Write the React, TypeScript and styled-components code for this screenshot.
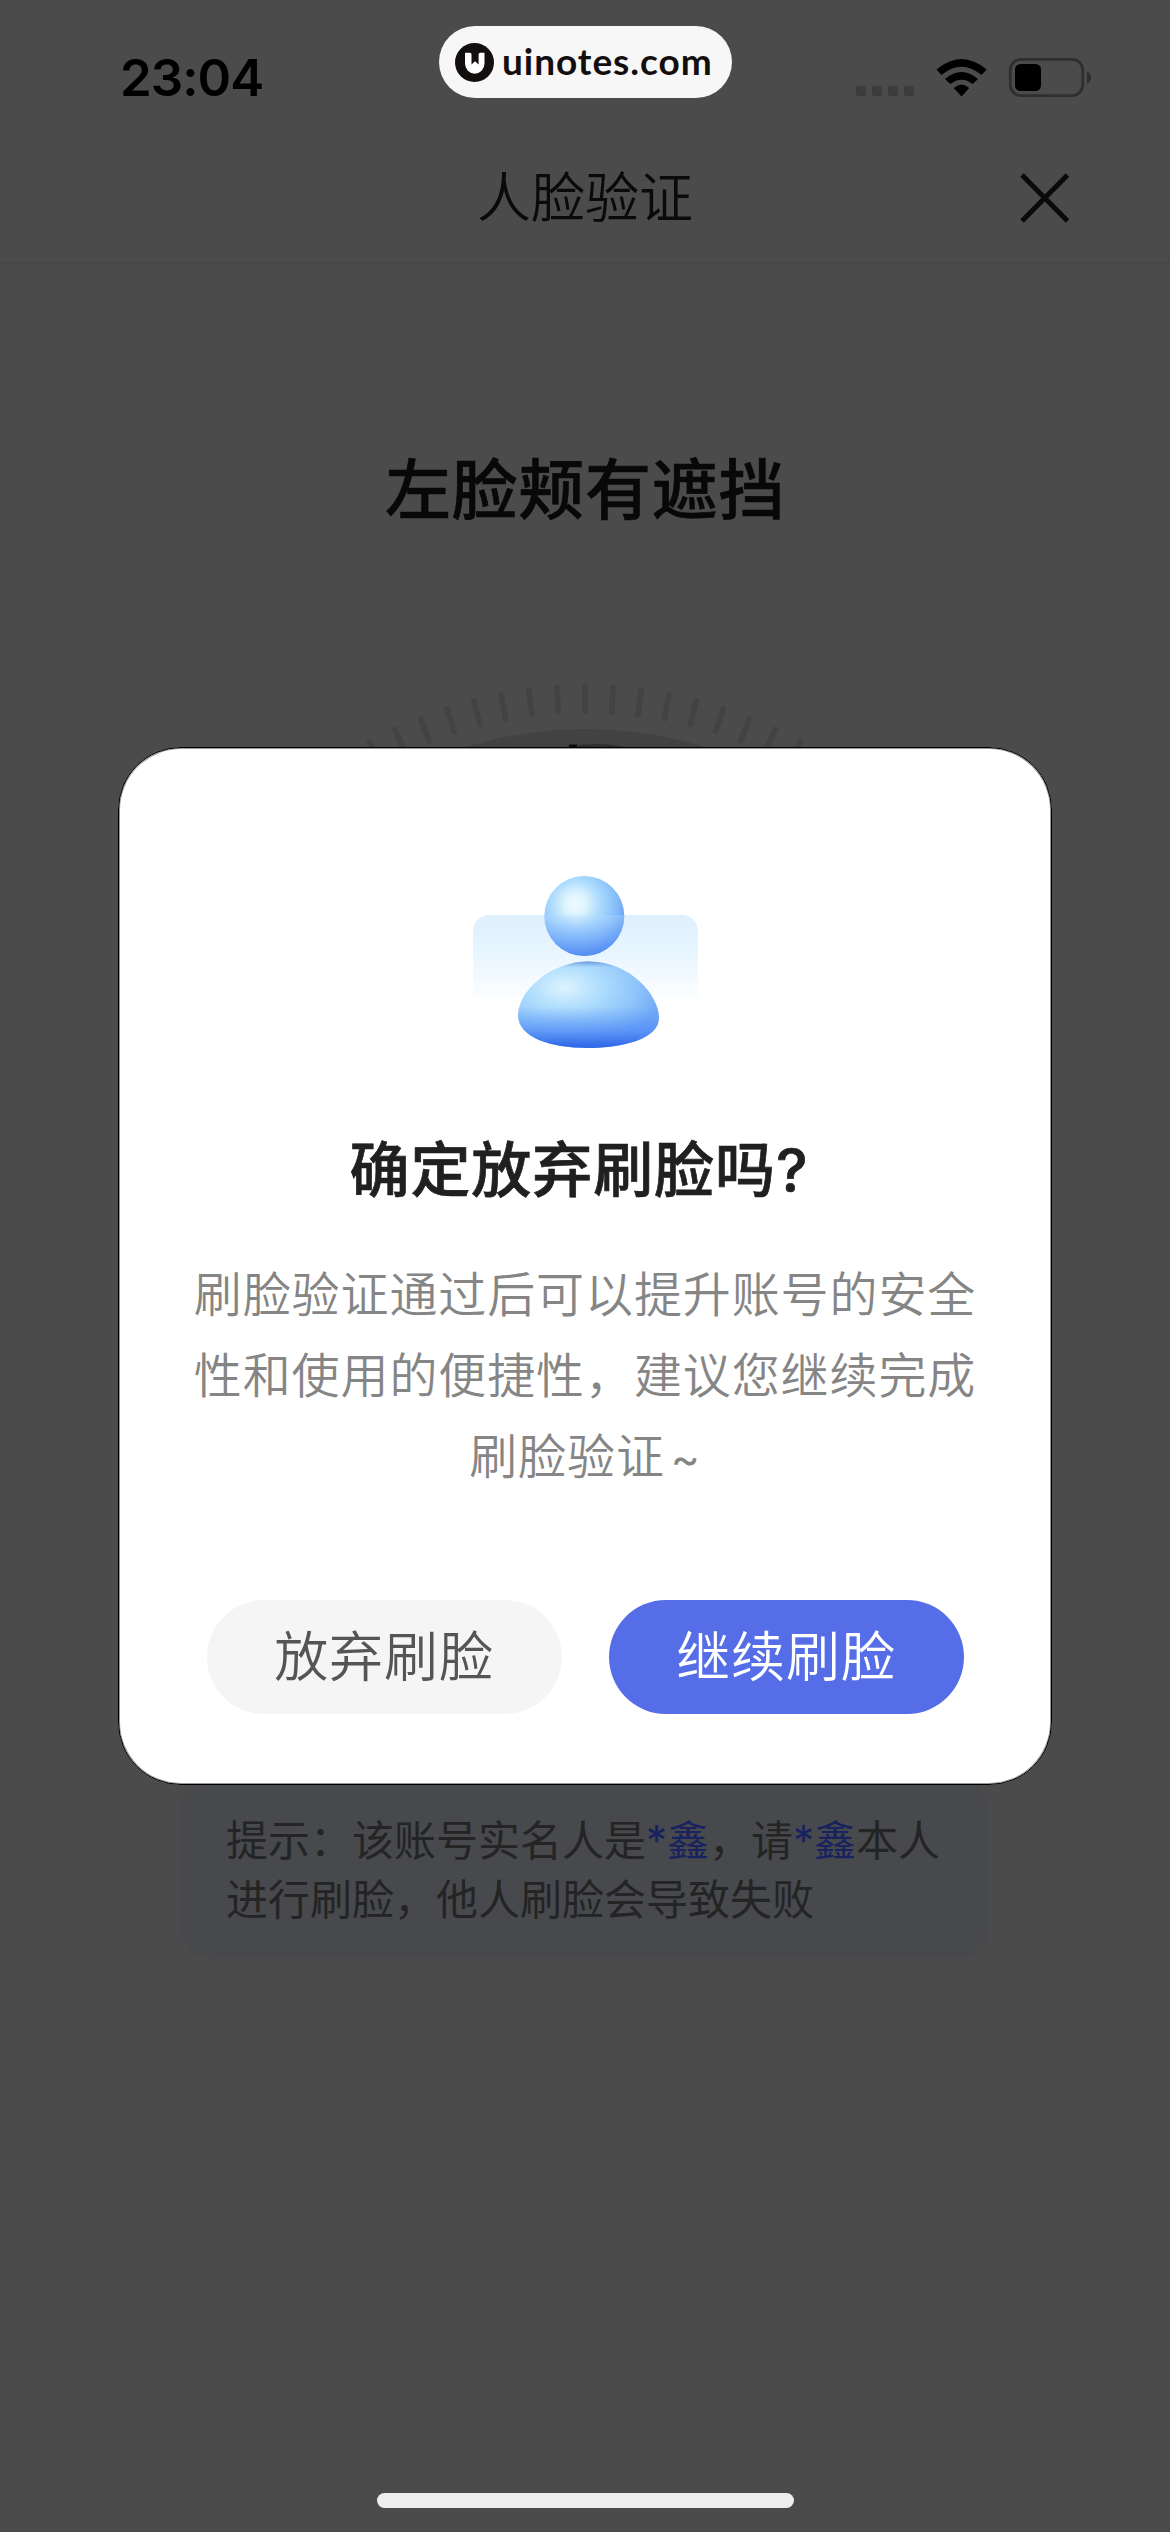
import React from "react";
import styled, { createGlobalStyle } from "styled-components";

const CJK = `"Noto Sans CJK SC", sans-serif`;

const Global = createGlobalStyle`
  * { box-sizing: border-box; }
  html, body { margin: 0; padding: 0; background: #4b4b4b; }
  button { border: 0; padding: 0; background: none; font: inherit; }
`;

const Screen = styled.div`
  position: relative;
  width: 1170px;
  height: 2532px;
  display: flex;
  flex-direction: column;
  align-items: center;
  overflow: hidden;
  background: #4b4b4b;
  font-family: ${CJK};
`;

const StatusBar = styled.header`
  width: 100%;
  height: 132px;
  flex: none;
  display: flex;
  justify-content: space-between;
  padding: 26px 79px 0 120px;
`;

const Clock = styled.time`
  width: 319px;
  padding-top: 20px;
  font: 600 51px/64px Inter, sans-serif;
  letter-spacing: -1px;
  color: #000;
`;

const SitePill = styled.div`
  width: 293px;
  height: 72px;
  flex: none;
  border-radius: 36px;
  background: #f7f7f7;
  display: flex;
  align-items: center;
  padding-left: 16px;
  gap: 8px;
  color: #140f0f;
  white-space: nowrap;
`;

const SiteName = styled.span`
  font: 700 37px/70px Lato, sans-serif;
  letter-spacing: 0.95px;
  height: 72px;
`;

const StatusIcons = styled.div`
  width: 359px;
  display: flex;
  justify-content: flex-end;
  padding-top: 32px;
`;

const NavBar = styled.nav`
  width: 100%;
  height: 132px;
  flex: none;
  display: grid;
  grid-template-columns: 150px 1fr 150px;
  align-items: center;
  border-bottom: 2px solid #474747;
`;

const NavTitle = styled.h1`
  grid-column: 2;
  margin: 0;
  padding-bottom: 5px;
  text-align: center;
  font-size: 54px;
  line-height: 80px;
  font-weight: 350;
  color: #0a0a0a;
`;

const CloseButton = styled.button`
  display: flex;
  padding-top: 1px;
`;

const Instruction = styled.h2`
  margin: 172px 0 0;
  font-size: 66px;
  line-height: 98px;
  letter-spacing: 0.7px;
  font-weight: 500;
  -webkit-text-stroke: 0.6px #080808;
  color: #080808;
`;

const Scanner = styled.div`
  height: 1101px;
  margin-top: 145px;
  flex: none;
  display: flex;
`;

const Tip = styled.section`
  width: 808px;
  height: 178px;
  flex: none;
  border-radius: 30px;
  background: #47494d;
  padding: 28px 40px 0 45px;
  font-size: 42px;
  line-height: 59px;
  color: #242424;
  white-space: nowrap;
`;

const TipLine = styled.p`
  margin: 0;
`;

const Name = styled.b`
  font-weight: 400;
  color: #18225f;
`;

const Star = styled.span`
  display: inline-block;
  width: 21px;
  text-align: center;
  font-family: Inter, sans-serif;
  line-height: 0;
`;

const Latin = styled.span`
  font-family: Inter, sans-serif;
  line-height: 0;
`;

const Overlay = styled.div`
  position: absolute;
  inset: 0;
  display: flex;
  flex-direction: column;
  align-items: center;
  padding-top: 747px;
`;

const Dialog = styled.div`
  width: 934px;
  height: 1038px;
  flex: none;
  border: 1px solid #000;
  border-radius: 63px;
  background: #fff;
  box-shadow: inset 0 0 0 1px rgba(0, 0, 0, 0.4);
  display: flex;
  flex-direction: column;
  align-items: center;
  padding-top: 118px;
`;

const DialogTitle = styled.h3`
  margin: 72px 0 0;
  padding-right: 12px;
  font-size: 60px;
  line-height: 88px;
  letter-spacing: 0.9px;
  font-weight: 500;
  -webkit-text-stroke: 0.7px #202020;
  color: #202020;
  white-space: nowrap;
`;

const DialogText = styled.p`
  margin: 41px 0 0;
  font-size: 48px;
  line-height: 81px;
  letter-spacing: 0.9px;
  font-weight: 350;
  color: #858585;
  text-align: center;
  white-space: nowrap;
`;

const Tilde = styled(Latin)`
  font-size: 44px;
  font-weight: 400;
  margin-left: 6px;
`;

const Actions = styled.div`
  display: flex;
  gap: 47px;
  margin-top: 106px;
`;

const ActionButton = styled.button<{ $primary?: boolean }>`
  width: 355px;
  height: 114px;
  padding-bottom: 7px;
  border-radius: 57px;
  background: ${(p) => (p.$primary ? "#556ee8" : "#f5f5f5")};
  color: ${(p) => (p.$primary ? "#fff" : "#555")};
  font-family: ${CJK};
  font-size: 54px;
  line-height: 80px;
  letter-spacing: 0.9px;
  font-weight: 350;
`;

const HomeIndicator = styled.div`
  width: 417px;
  height: 15px;
  flex: none;
  margin-top: 708px;
  border-radius: 8px;
  background: #eee;
`;

const SiteLogo = () => (
  <svg width="39" height="39" viewBox="0 0 39 39">
    <circle cx="19.5" cy="19.5" r="19.5" fill="#140f0f" />
    <path
      d="M10.500 9.700H15q1.500 0 1.500 1.500V21.500L20 18.300 23.600 21.500V11.200q0-1.500 1.500-1.500H29.500V20.500a9.750 10.200 0 0 1-19.500 0V10.200q0-.5.5-.5z"
      fill="#fff"
    />
  </svg>
);

const Signals = () => (
  <svg width="235" height="40" viewBox="856 58 235 40">
    {[856, 872, 888, 904].map((x) => (
      <rect key={x} x={x} y="86" width="10" height="10" rx="3" fill="#3b3b3b" />
    ))}
    <g fill="#000">
      <path d="M936.500 69.500 Q961.500 48.500 986.700 69.500 L981.500 75 Q961.500 58.500 941.500 75 Z" />
      <path d="M945 79 Q961.500 65 978 79 L972.800 84 Q961.500 75.500 950.300 84 Z" />
      <path d="M953.800 88 Q961.500 81 969.200 88 L961.500 96.500 Z" />
    </g>
    <rect x="1010.300" y="59.400" width="72.400" height="36.200" rx="10.500" fill="none" stroke="#2f2f2f" strokeWidth="2.800" />
    <rect x="1015" y="64" width="26" height="27" rx="5.500" fill="#000" />
    <path d="M1087 71.500q4.200 1.500 4.200 6t-4.200 6z" fill="#2f2f2f" />
  </svg>
);

const Cross = () => (
  <svg width="50" height="50" viewBox="0 0 50 50">
    <path d="M2 2L47.500 48M47.500 2L2 48" stroke="#0a0a0a" strokeWidth="5" />
  </svg>
);

const FaceRing = () => (
  <svg width="910" height="1101" viewBox="-455 -455 910 1101">
    {Array.from({ length: 100 }, (_, i) => (
      <line
        key={i}
        y1="-447"
        y2="-423"
        stroke="#434343"
        strokeWidth="5.800"
        strokeLinecap="round"
        transform={`rotate(${i * 3.6})`}
      />
    ))}
    <circle r="405" fill="#424242" />
    <circle cx="12" cy="-240" r="150" fill="#2f2f2f" />
    <rect x="-16" y="-389.500" width="8" height="8" fill="#0c0c0c" />
  </svg>
);

const PersonArt = () => (
  <svg width="225" height="184" viewBox="473 866 225 184">
    <defs>
      <radialGradient id="head" cx="0.390" cy="0.350" r="0.680">
        <stop offset="0" stopColor="#f0fbff" />
        <stop offset="0.200" stopColor="#def3ff" />
        <stop offset="0.450" stopColor="#abdbfd" />
        <stop offset="0.750" stopColor="#86befa" />
        <stop offset="1" stopColor="#5f98f0" />
      </radialGradient>
      <linearGradient id="headShade" x1="0" y1="0" x2="0" y2="1">
        <stop offset="0.500" stopColor="#5c96fa" stopOpacity="0" />
        <stop offset="1" stopColor="#4c88f4" stopOpacity="0.700" />
      </linearGradient>
      <radialGradient id="body" cx="0.330" cy="0.300" r="0.700">
        <stop offset="0" stopColor="#dff3ff" />
        <stop offset="0.350" stopColor="#b0defd" />
        <stop offset="0.750" stopColor="#8cc3fa" />
        <stop offset="1" stopColor="#72a9f8" />
      </radialGradient>
      <linearGradient id="bodyShade" x1="0" y1="0" x2="0" y2="1">
        <stop offset="0" stopColor="#5b86c8" stopOpacity="0.800" />
        <stop offset="0.070" stopColor="#78b0f4" stopOpacity="0" />
        <stop offset="0.520" stopColor="#5f9af8" stopOpacity="0" />
        <stop offset="0.800" stopColor="#508af6" stopOpacity="0.700" />
        <stop offset="0.970" stopColor="#336be8" />
      </linearGradient>
      <linearGradient id="card" x1="0" y1="0" x2="0" y2="1">
        <stop offset="0" stopColor="#def0fc" />
        <stop offset="0.450" stopColor="#e9f6ff" />
        <stop offset="1" stopColor="#fff" />
      </linearGradient>
      <linearGradient id="glass" x1="0" y1="0" x2="0" y2="1">
        <stop offset="0" stopColor="#b8dcff" stopOpacity="0.300" />
        <stop offset="1" stopColor="#9cc8ff" stopOpacity="0" />
      </linearGradient>
      <clipPath id="headClip">
        <circle cx="584.300" cy="916" r="40" />
      </clipPath>
    </defs>
    <path d="M473 1005V931a16 16 0 0 1 16-16H682a16 16 0 0 1 16 16V1005z" fill="url(#card)" />
    <circle cx="584.300" cy="916" r="40" fill="url(#head)" />
    <circle cx="584.300" cy="916" r="40" fill="url(#headShade)" />
    <rect x="540" y="915" width="90" height="41" fill="url(#glass)" clipPath="url(#headClip)" />
    {["body", "bodyShade"].map((fill) => (
      <path
        key={fill}
        d="M589 961.500C630 961.500 659 995 659 1018C659 1039 622 1048 588 1048C549 1048 518 1037 518 1015C518 992 549 961.500 589 961.500Z"
        fill={`url(#${fill})`}
      />
    ))}
  </svg>
);

const MaskedName = () => (
  <Name>
    <Star>*</Star>鑫
  </Name>
);

export default function App() {
  return (
    <Screen>
      <Global />
      <StatusBar>
        <Clock>23:04</Clock>
        <SitePill>
          <SiteLogo />
          <SiteName>uinotes.com</SiteName>
        </SitePill>
        <StatusIcons>
          <Signals />
        </StatusIcons>
      </StatusBar>
      <NavBar>
        <NavTitle>人脸验证</NavTitle>
        <CloseButton aria-label="关闭">
          <Cross />
        </CloseButton>
      </NavBar>
      <Instruction>左脸颊有遮挡</Instruction>
      <Scanner>
        <FaceRing />
      </Scanner>
      <Tip>
        <TipLine>
          提示：该账号实名人是<MaskedName />，请<MaskedName />本人
        </TipLine>
        <TipLine>进行刷脸，他人刷脸会导致失败</TipLine>
      </Tip>
      <Overlay>
        <Dialog role="dialog">
          <PersonArt />
          <DialogTitle>
            确定放弃刷脸吗<Latin>?</Latin>
          </DialogTitle>
          <DialogText>
            刷脸验证通过后可以提升账号的安全
            <br />
            性和使用的便捷性，建议您继续完成
            <br />
            刷脸验证<Tilde>~</Tilde>
          </DialogText>
          <Actions>
            <ActionButton>放弃刷脸</ActionButton>
            <ActionButton $primary>继续刷脸</ActionButton>
          </Actions>
        </Dialog>
        <HomeIndicator />
      </Overlay>
    </Screen>
  );
}
